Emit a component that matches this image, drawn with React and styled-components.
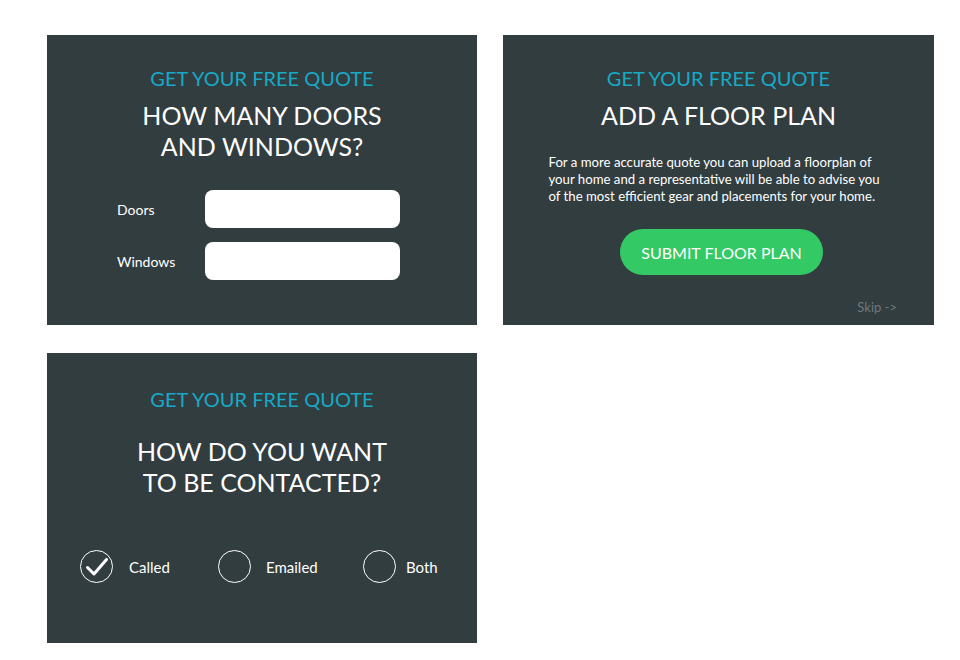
import React, { useState } from 'react'
import styled, { createGlobalStyle } from 'styled-components'

const GlobalStyle = createGlobalStyle`
  html, body {
    margin: 0;
    background: #ffffff;
    font-family: "Lato", "Open Sans", sans-serif;
  }
`

const Page = styled.div`
  width: 960px;
  height: 660px;
  box-sizing: border-box;
  padding: 35px 0 0 47px;
  display: grid;
  grid-template-columns: 430px 431px;
  grid-auto-rows: 290px;
  column-gap: 26px;
  row-gap: 28px;
`

const Card = styled.section`
  background: #323d40;
  color: #ffffff;
  display: flex;
  flex-direction: column;
  align-items: center;
  position: relative;
  padding-top: ${(p) => p.$top || 31}px;
  box-sizing: border-box;
`

const Kicker = styled.div`
  color: #17a9c6;
  font-size: 20px;
  line-height: 24px;
`

const Heading = styled.h2`
  margin: ${(p) => p.$gap || 10}px 0 0;
  font-weight: 400;
  font-size: 25px;
  line-height: 31px;
  text-align: center;
`

const Fields = styled.div`
  margin: 28px 7px 0 0;
  display: grid;
  grid-template-columns: 88px 195px;
  row-gap: 14px;
  align-items: center;
`

const Label = styled.label`
  font-size: 14px;
`

const Field = styled.input`
  height: 38px;
  border: none;
  border-radius: 8px;
  background: #ffffff;
  outline: none;
  padding: 0 12px;
  box-sizing: border-box;
  font-size: 14px;
`

const Copy = styled.p`
  margin: 23px 0 0;
  width: 340px;
  font-size: 13.2px;
  line-height: 17px;
`

const Submit = styled.button`
  margin: 24px 0 0 6px;
  width: 203px;
  height: 46px;
  border: none;
  border-radius: 23px;
  background: #33c965;
  color: #ffffff;
  font-family: inherit;
  font-size: 16px;
  cursor: pointer;
`

const Skip = styled.a`
  position: absolute;
  right: 37px;
  bottom: 10px;
  color: #6e797b;
  font-size: 13px;
  text-decoration: none;
`

const Options = styled.div`
  margin-top: 52px;
  align-self: stretch;
  display: flex;
  padding-left: 33px;
`

const Option = styled.label`
  display: flex;
  align-items: center;
  gap: ${(p) => p.$gap}px;
  font-size: 15px;
  width: ${(p) => p.$w}px;
  cursor: pointer;
`

const Ring = styled.span`
  width: 33px;
  height: 33px;
  box-sizing: border-box;
  border: 1.5px solid #ffffff;
  border-radius: 50%;
  display: flex;
  align-items: center;
  justify-content: center;
`

const Check = () => (
  <svg width="24" height="24" viewBox="0 0 24 24">
    <path d="M2.5 12.5 L9 19 L21.5 4.5" fill="none" stroke="#fff" strokeWidth="3" strokeLinecap="round" strokeLinejoin="round" />
  </svg>
)

const choices = [
  { name: 'Called', w: 138, gap: 16 },
  { name: 'Emailed', w: 145, gap: 15 },
  { name: 'Both', w: 90, gap: 10 },
]

const App = () => {
  const [picked, setPicked] = useState('Called')

  return (
    <>
      <GlobalStyle />
      <Page>
        <Card>
          <Kicker>GET YOUR FREE QUOTE</Kicker>
          <Heading>HOW MANY DOORS<br />AND WINDOWS?</Heading>
          <Fields>
            <Label>Doors</Label>
            <Field />
            <Label>Windows</Label>
            <Field />
          </Fields>
        </Card>
        <Card>
          <Kicker>GET YOUR FREE QUOTE</Kicker>
          <Heading>ADD A FLOOR PLAN</Heading>
          <Copy>
            For a more accurate quote you can upload a floorplan of your home and a representative will be able to advise you of the most efficient gear and placements for your home.
          </Copy>
          <Submit>SUBMIT FLOOR PLAN</Submit>
          <Skip href="#">Skip -&gt;</Skip>
        </Card>
        <Card $top={34}>
          <Kicker>GET YOUR FREE QUOTE</Kicker>
          <Heading $gap={25}>HOW DO YOU WANT<br />TO BE CONTACTED?</Heading>
          <Options>
            {choices.map((c) => (
              <Option key={c.name} $w={c.w} $gap={c.gap} onClick={() => setPicked(c.name)}>
                <Ring>{picked === c.name && <Check />}</Ring>
                {c.name}
              </Option>
            ))}
          </Options>
        </Card>
      </Page>
    </>
  )
}

export default App
